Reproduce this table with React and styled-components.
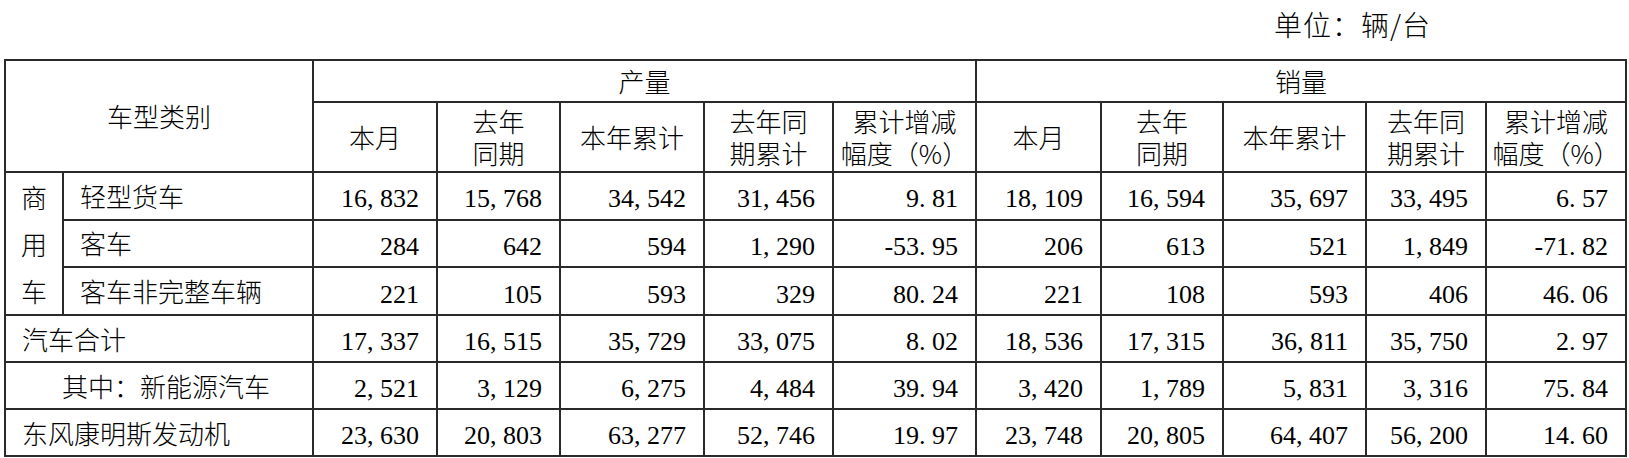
import styled, { createGlobalStyle } from 'styled-components';

const GlobalStyle = createGlobalStyle`
  body {
    margin: 0;
    background: #fff;
    color: #000;
    font-family: "Noto Sans CJK SC", "Noto Sans", sans-serif;
  }
`;

const widths = [58, 250, 124, 123, 144, 129, 143, 125, 122, 143, 120, 140];

const subHeads = [
  ['本月'],
  ['去年', '同期'],
  ['本年累计'],
  ['去年同', '期累计'],
  ['累计增减', '幅度（%）'],
];

const rows = [
  { name: '轻型货车', vals: ['16,832', '15,768', '34,542', '31,456', '9.81', '18,109', '16,594', '35,697', '33,495', '6.57'] },
  { name: '客车', vals: ['284', '642', '594', '1,290', '-53.95', '206', '613', '521', '1,849', '-71.82'] },
  { name: '客车非完整车辆', vals: ['221', '105', '593', '329', '80.24', '221', '108', '593', '406', '46.06'] },
];

const totals = [
  { name: '汽车合计', vals: ['17,337', '16,515', '35,729', '33,075', '8.02', '18,536', '17,315', '36,811', '35,750', '2.97'] },
  { name: '其中：新能源汽车', indent: true, vals: ['2,521', '3,129', '6,275', '4,484', '39.94', '3,420', '1,789', '5,831', '3,316', '75.84'] },
  { name: '东风康明斯发动机', vals: ['23,630', '20,803', '63,277', '52,746', '19.97', '23,748', '20,805', '64,407', '56,200', '14.60'] },
];

function Num({ value }) {
  const parts = [];
  let buf = '';
  value.split('').forEach((ch, i) => {
    if (/[0-9]/.test(ch)) {
      buf += ch;
    } else {
      if (buf) parts.push(buf);
      buf = '';
      parts.push(
        <Punct key={i} $minus={ch === '-'}>
          {ch}
        </Punct>
      );
    }
  });
  if (buf) parts.push(buf);
  return <NumText>{parts}</NumText>;
}

export default function App() {
  return (
    <Page>
      <GlobalStyle />
      <UnitBar>单位：辆/台</UnitBar>
      <Table>
        <colgroup>
          {widths.map((w, i) => (
            <col key={i} style={{ width: w }} />
          ))}
        </colgroup>
        <thead>
          <TopRow>
            <Th colSpan={2} rowSpan={2}>车型类别</Th>
            <Th colSpan={5}>产量</Th>
            <Th colSpan={5}>销量</Th>
          </TopRow>
          <SubRow>
            {[...subHeads, ...subHeads].map((lines, i) => (
              <Th key={i}>
                {lines.map((l) => (
                  <HeadLine key={l}>{l}</HeadLine>
                ))}
              </Th>
            ))}
          </SubRow>
        </thead>
        <tbody>
          {rows.map((r, ri) => (
            <DataRow key={r.name}>
              {ri === 0 && (
                <GroupCell rowSpan={3}>
                  <HeadLine>商</HeadLine>
                  <HeadLine>用</HeadLine>
                  <HeadLine>车</HeadLine>
                </GroupCell>
              )}
              <NameCell>{r.name}</NameCell>
              {r.vals.map((v, i) => (
                <NumCell key={i}>
                  <Num value={v} />
                </NumCell>
              ))}
            </DataRow>
          ))}
          {totals.map((r) => (
            <DataRow key={r.name}>
              <NameCell colSpan={2} $indent={r.indent}>{r.name}</NameCell>
              {r.vals.map((v, i) => (
                <NumCell key={i}>
                  <Num value={v} />
                </NumCell>
              ))}
            </DataRow>
          ))}
        </tbody>
      </Table>
    </Page>
  );
}

const Page = styled.div`
  width: 1629px;
  padding: 0 4px;
  box-sizing: border-box;
`;

const UnitBar = styled.div`
  height: 59px;
  display: flex;
  justify-content: flex-end;
  padding-right: 194px;
  font-size: 28px;
  line-height: 48px;
  letter-spacing: 1px;
  font-weight: 300;
`;

const Table = styled.table`
  width: 1621px;
  border-collapse: collapse;
  table-layout: fixed;
  border: 2px solid #2a2a2a;
  font-size: 26px;
  font-weight: 300;
`;

const TopRow = styled.tr`
  height: 42px;
`;

const SubRow = styled.tr`
  height: 70px;
`;

const DataRow = styled.tr`
  height: 47px;
`;

const Th = styled.th`
  border: 2px solid #2a2a2a;
  font-weight: 300;
  text-align: center;
  vertical-align: middle;
  padding: 0;
  line-height: 32px;
  white-space: nowrap;
`;

const HeadLine = styled.span`
  display: block;
`;

const GroupCell = styled.td`
  border: 2px solid #2a2a2a;
  text-align: center;
  padding: 0;
  line-height: 47px;
`;

const NameCell = styled.td`
  border: 2px solid #2a2a2a;
  padding: 0 0 0 ${(p) => (p.$indent ? '56px' : '16px')};
  white-space: nowrap;
  line-height: 30px;
`;

const NumCell = styled.td`
  border: 2px solid #2a2a2a;
  text-align: right;
  padding: 0 17px 0 0;
  white-space: nowrap;
`;

const NumText = styled.span`
  font-family: "Liberation Serif", "Times New Roman", serif;
  font-size: 26px;
  font-weight: 400;
  line-height: 30px;
`;

const Punct = styled.span`
  display: inline-block;
  width: 0.5em;
  text-align: ${(p) => (p.$minus ? 'right' : 'left')};
`;
